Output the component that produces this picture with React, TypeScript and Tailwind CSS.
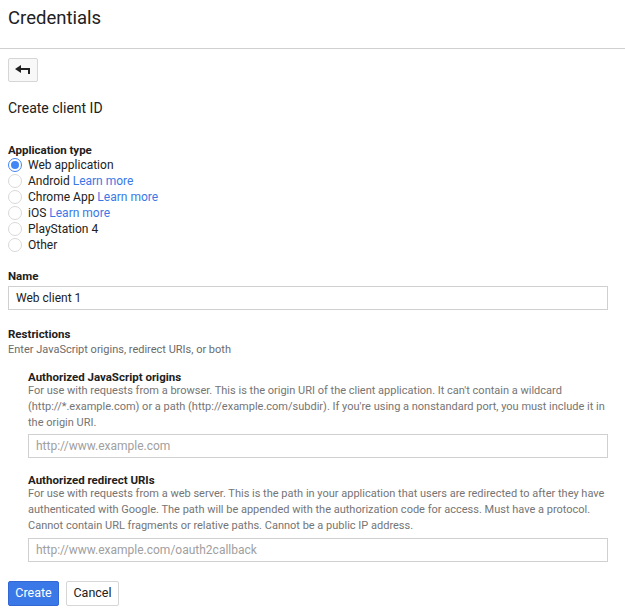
import React from "react";

const font = { fontFamily: "Roboto, 'Liberation Sans', sans-serif" };

function Radio({ checked }: { checked?: boolean }) {
  return (
    <span
      className={
        "mr-[6px] flex h-[14px] w-[14px] shrink-0 items-center justify-center rounded-full border bg-white " +
        (checked ? "border-[#4285f4]" : "border-[#d9d9d9]")
      }
    >
      {checked && <span className="h-[8px] w-[8px] rounded-full bg-[#4285f4]" />}
    </span>
  );
}

function RadioRow({ label, learn, checked }: { label: string; learn?: boolean; checked?: boolean }) {
  return (
    <div className="flex h-4 items-center">
      <Radio checked={checked} />
      <span className="text-[12px] text-[#212121]">
        {label}
        {learn && <span className="text-[#3b78e7]"> Learn more</span>}
      </span>
    </div>
  );
}

export default function App() {
  return (
    <div className="min-h-[614px] w-[625px] bg-white text-[#212121]" style={font}>
      <div className="h-[49px] border-b border-[#d0d0d0] px-2 pt-[6px]">
        <h1 className="text-[18.5px] leading-[24px]">Credentials</h1>
      </div>

      <div className="px-2 pt-[9px]">
        <button className="flex h-[24px] w-[30px] items-center justify-center rounded-[2px] border border-[#d6d6d6] bg-[#f8f8f8]">
          <svg width="16" height="10" viewBox="0 0 16 10">
            <path d="M0 4 L6 0 L6 3 L15 3 L15 9 L13 9 L13 5 L6 5 L6 8 Z" fill="#222" />
          </svg>
        </button>

        <h2 className="mt-[17px] text-[14px] leading-[18px]">Create client ID</h2>

        <div className="mt-[26px] text-[11.5px] font-bold leading-[14px]">Application type</div>
        <div className="flex flex-col">
          <RadioRow label="Web application" checked />
          <RadioRow label="Android" learn />
          <RadioRow label="Chrome App" learn />
          <RadioRow label="iOS" learn />
          <RadioRow label="PlayStation 4" />
          <RadioRow label="Other" />
        </div>

        <div className="mt-[16px] text-[11.5px] font-bold leading-[14px]">Name</div>
        <div className="mt-[3px] flex h-[24px] w-[600px] items-center border border-[#d0d0d0] px-[7px] text-[12px]">
          Web client 1
        </div>

        <div className="mt-[17px] text-[11.5px] font-bold leading-[14px]">Restrictions</div>
        <div className="mt-[1px] text-[11px] leading-[16px] text-[#6b6b6b]">
          Enter JavaScript origins, redirect URIs, or both
        </div>

        <div className="pl-5">
          <div className="mt-[12px] text-[11.5px] font-bold leading-[14px]">Authorized JavaScript origins</div>
          <p className="-mt-px text-[11px] leading-[16px] text-[#757575]">
            For use with requests from a browser. This is the origin URI of the client application. It can't contain a wildcard (http://*.example.com) or a path (http://example.com/subdir). If you're using a nonstandard port, you must include it in the origin URI.
          </p>
          <div className="mt-[3px] flex h-[24px] w-[580px] items-center border border-[#d0d0d0] px-[7px] text-[12px] text-[#a0a0a0]">
            http://www.example.com
          </div>

          <div className="mt-[15px] text-[11.5px] font-bold leading-[14px]">Authorized redirect URIs</div>
          <p className="-mt-px text-[11px] leading-[16px] text-[#757575]">
            For use with requests from a web server. This is the path in your application that users are redirected to after they have authenticated with Google. The path will be appended with the authorization code for access. Must have a protocol. Cannot contain URL fragments or relative paths. Cannot be a public IP address.
          </p>
          <div className="mt-[4px] flex h-[24px] w-[580px] items-center border border-[#d0d0d0] px-[7px] text-[12px] text-[#a0a0a0]">
            http://www.example.com/oauth2callback
          </div>
        </div>

        <div className="mt-[19px] flex gap-[7px]">
          <button className="h-[25px] w-[51px] rounded-[2px] border border-[#3367d6] bg-[#3b78e7] text-[12.5px] text-white">
            Create
          </button>
          <button className="h-[25px] w-[53px] rounded-[2px] border border-[#d6d6d6] bg-white text-[12.5px] text-[#212121]">
            Cancel
          </button>
        </div>
      </div>
    </div>
  );
}
